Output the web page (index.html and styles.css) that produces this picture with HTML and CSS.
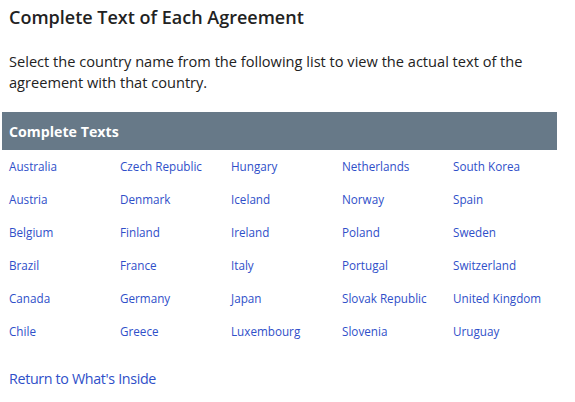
FILE: index.html
```html
<!DOCTYPE html>
<html>
<head>
<meta charset="utf-8">
<link rel="stylesheet" href="styles.css">
</head>
<body>
<div class="page">
  <h2 class="title">Complete Text of Each Agreement</h2>
  <p class="intro">Select the country name from the following list to view the actual text of the agreement with that country.</p>
  <div class="panel">
    <div class="panel-head">Complete Texts</div>
    <div class="grid">
      <a href="#">Australia</a><a href="#">Czech Republic</a><a href="#">Hungary</a><a href="#">Netherlands</a><a href="#">South Korea</a>
      <a href="#">Austria</a><a href="#">Denmark</a><a href="#">Iceland</a><a href="#">Norway</a><a href="#">Spain</a>
      <a href="#">Belgium</a><a href="#">Finland</a><a href="#">Ireland</a><a href="#">Poland</a><a href="#">Sweden</a>
      <a href="#">Brazil</a><a href="#">France</a><a href="#">Italy</a><a href="#">Portugal</a><a href="#">Switzerland</a>
      <a href="#">Canada</a><a href="#">Germany</a><a href="#">Japan</a><a href="#">Slovak Republic</a><a href="#">United Kingdom</a>
      <a href="#">Chile</a><a href="#">Greece</a><a href="#">Luxembourg</a><a href="#">Slovenia</a><a href="#">Uruguay</a>
    </div>
  </div>
  <a class="return" href="#">Return to What's Inside</a>
</div>
</body>
</html>
```
FILE: styles.css
```css
html, body {
  margin: 0;
  padding: 0;
  background: #fff;
}
body {
  font-family: "Open Sans", "Noto Sans", sans-serif;
  color: #222;
}
.page {
  width: 555px;
  padding: 0 0 0 2px;
}
.title {
  margin: 0;
  padding: 5px 0 0 7px;
  font-size: 18px;
  line-height: 24px;
  font-weight: 600;
  color: #222;
}
.intro {
  margin: 0;
  padding: 22px 0 0 7px;
  font-size: 14.6px;
  line-height: 21px;
  width: 540px;
}
.panel {
  margin-top: 19px;
}
.panel-head {
  background: #677988;
  color: #fff;
  font-weight: 700;
  font-size: 14.2px;
  height: 38px;
  line-height: 39px;
  padding-left: 7px;
}
.grid {
  display: grid;
  grid-template-columns: repeat(5, 111px);
  grid-auto-rows: 33px;
}
.grid a {
  padding-left: 7px;
  font-size: 11.7px;
  line-height: 33px;
  color: #2f4fc9;
  text-decoration: none;
  white-space: nowrap;
}
.return {
  display: block;
  margin-top: 21px;
  padding-left: 7px;
  font-size: 14.3px;
  letter-spacing: -0.35px;
  line-height: 20px;
  color: #2f4fc9;
  text-decoration: none;
}
```
